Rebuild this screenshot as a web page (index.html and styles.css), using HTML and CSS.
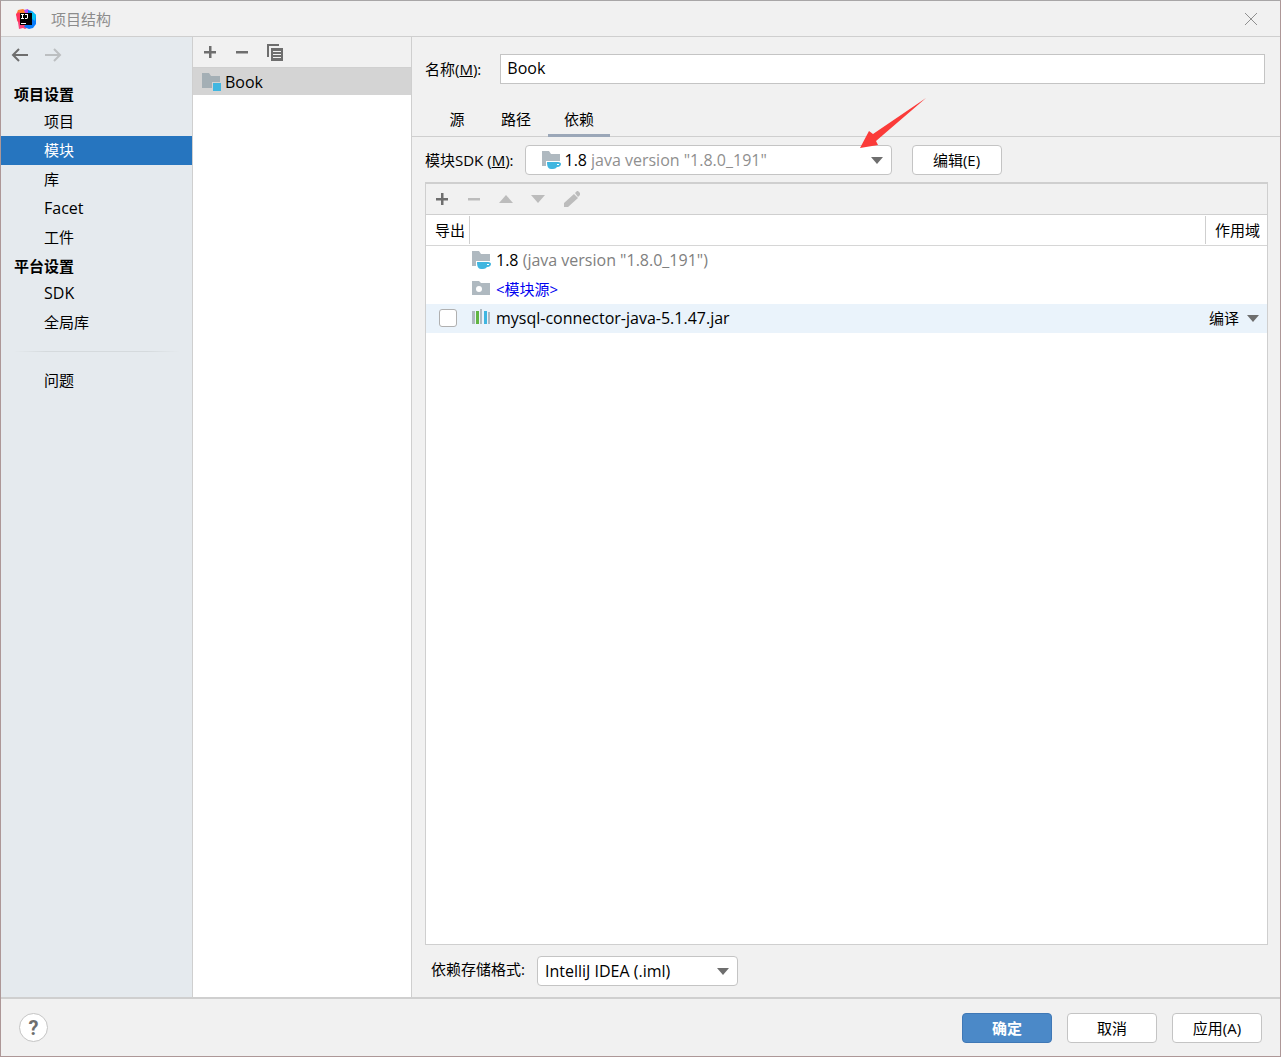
FILE: index.html
```html
<!DOCTYPE html>
<html lang="zh-CN">
<head>
<meta charset="utf-8">
<title>项目结构</title>
<link rel="stylesheet" href="styles.css">
</head>
<body>
<svg class="defs" aria-hidden="true">
  <symbol id="sdk" viewBox="0 0 20 18">
    <path fill="#afb9c0" d="M1 0h7l2 3h9v7H5v5H1z"/>
    <path fill="#40b6e0" d="M6 11h11c2 0 3 1 3 2s-1 3-4 3c-1 1-2 2-4 2h-2c-3 0-4-3-4-7z"/>
    <path fill="#fff" d="M16 13h2v1h-2z"/>
  </symbol>
  <symbol id="plus" viewBox="0 0 14 14"><path d="M6 1h2.5v5H13v2.500H8.500V13H6V8.500H1V6h5z"/></symbol>
  <symbol id="minus" viewBox="0 0 14 14"><path d="M1 6h12v2.500H1z"/></symbol>
</svg>
<div class="window">
  <header class="titlebar">
    <svg class="logo" viewBox="0 0 20 20" aria-hidden="true">
      <path fill="#fc7d31" d="M2 1l5-1 5 3-3 9-7 1-1-3 1-2-2-2z"/>
      <path fill="#fe315d" d="M0 5l3-2 3 4v9L3 15l-2-4z"/>
      <path fill="#f9447a" d="M2 13l6 1 3 5-2 1-2-1-4 1z"/>
      <path fill="#b74af7" d="M8 1l4-1 2 4-4 2z"/>
      <path fill="#087cfa" d="M12 1l4 1 4 4v9l-3 4-4 1-5-2 4-7z"/>
      <path fill="#07c3f2" d="M15 2l5 4-1 6-4-3z"/>
      <path d="M4 4h12v12H4z"/>
      <path fill="#fff" d="M5 5h3v1H7v3h1v1H5V9h1V6H5zM9 5h3v4l-1 1H9V9h2V6H9zM5 14h5v1H5z"/>
    </svg>
    <h1 class="title">项目结构</h1>
    <button class="close" aria-label="关闭"><svg viewBox="0 0 14 14"><path d="M1 1l12 12M13 1L1 13"/></svg></button>
  </header>

  <div class="body">
    <nav class="sidebar">
      <div class="history">
        <button class="icon-button" aria-label="后退"><svg class="arrow" viewBox="0 0 18 14"><path d="M17 7H2M8 1L2 7l6 6"/></svg></button>
        <button class="icon-button off" aria-label="前进"><svg class="arrow" viewBox="0 0 18 14"><path d="M1 7h15M10 1l6 6-6 6"/></svg></button>
      </div>
      <h2 class="group">项目设置</h2>
      <a class="item" href="#project">项目</a>
      <a class="item current" href="#modules">模块</a>
      <a class="item" href="#libraries">库</a>
      <a class="item latin" href="#facets">Facet</a>
      <a class="item" href="#artifacts">工件</a>
      <h2 class="group">平台设置</h2>
      <a class="item latin" href="#sdk">SDK</a>
      <a class="item" href="#global">全局库</a>
      <hr class="divider">
      <a class="item" href="#problems">问题</a>
    </nav>

    <section class="modules">
      <div class="toolbar modules-toolbar">
        <button class="icon-button" aria-label="添加"><svg class="glyph"><use href="#plus"/></svg></button>
        <button class="icon-button" aria-label="移除"><svg class="glyph"><use href="#minus"/></svg></button>
        <button class="icon-button" aria-label="复制"><svg class="copy" viewBox="0 0 16 17"><path d="M0 0h12v2H2v11H0z"/><path fill-rule="evenodd" d="M4 4h12v13H4zM6 7v1h8V7zM6 10v1h8v-1zM6 13v1h8v-1z"/></svg></button>
      </div>
      <a class="module latin" href="#book">
        <svg class="module-icon" viewBox="0 0 20 18"><path fill="#a4afb5" d="M1 0h7l2 3h9v6h-8v6H1z"/><path fill="#40b6e0" d="M12 10h8v8h-8z"/></svg>
        <span>Book</span>
      </a>
    </section>

    <main class="editor">
      <div class="name-row">
        <label for="name">名称(<u>M</u>):</label>
        <input class="name latin" id="name" type="text" value="Book">
      </div>
      <div class="tabs" role="tablist">
        <button class="tab" role="tab">源</button>
        <button class="tab" role="tab">路径</button>
        <button class="tab active" role="tab" aria-selected="true">依赖</button>
      </div>
      <div class="sdk-row">
        <label for="sdk-version">模块SDK (<u>M</u>):</label>
        <div class="combo sdk-combo latin">
          <svg class="row-icon"><use href="#sdk"/></svg>
          <span>1.8</span>
          <select class="sdk-select" id="sdk-version"><option>java version "1.8.0_191"</option></select>
          <svg class="pointer" viewBox="0 0 66 50" aria-hidden="true"><path d="M0 50l9-17 4 3L66 0 16 43l2 4z"/></svg>
        </div>
        <button class="button">编辑(E)</button>
      </div>
      <div class="panel">
        <div class="toolbar panel-toolbar">
          <button class="icon-button" aria-label="添加"><svg class="glyph"><use href="#plus"/></svg></button>
          <button class="icon-button off" aria-label="移除"><svg class="glyph"><use href="#minus"/></svg></button>
          <button class="icon-button off" aria-label="上移"><svg class="glyph" viewBox="0 0 14 14"><path d="M7 3l7 8H0z"/></svg></button>
          <button class="icon-button off" aria-label="下移"><svg class="glyph" viewBox="0 0 14 14"><path d="M0 3h14l-7 8z"/></svg></button>
          <button class="icon-button off" aria-label="编辑"><svg class="pencil" viewBox="0 0 18 18"><path d="M1 13L11 4l4 4L5 17H1zM12 3l2-2h1l2 2v2l-2 2z"/></svg></button>
        </div>
        <table class="deps">
          <thead>
            <tr><th class="export"><span>导出</span></th><th></th><th class="scope"><span>作用域</span></th></tr>
          </thead>
          <tbody>
            <tr><td></td><td><div class="dep latin"><svg class="row-icon"><use href="#sdk"/></svg><span>1.8 <span class="muted">(java version "1.8.0_191")</span></span></div></td><td></td></tr>
            <tr><td></td><td><div class="dep"><svg class="row-icon" viewBox="0 0 20 18"><path fill="#afb9c0" d="M1 1h7l2 2h9v12H1z"/><circle cx="8" cy="9" r="3" fill="#fff"/></svg><span class="source">&lt;模块源&gt;</span></div></td><td></td></tr>
            <tr class="selected">
              <td><input class="check" type="checkbox" aria-label="导出 mysql-connector-java-5.1.47.jar"></td>
              <td><div class="dep latin"><svg class="row-icon" viewBox="0 0 20 18"><path fill="#afb9c0" d="M1 2h3v13H1zM9 0h2v15H9zM17 3h2v12h-2z"/><path fill="#62b543" d="M5 2h3v13H5z"/><path fill="#40b6e0" d="M13 2h3v13h-3z"/></svg><span>mysql-connector-java-5.1.47.jar</span></div></td>
              <td><select class="scope-select" aria-label="作用域"><option>编译</option></select></td>
            </tr>
          </tbody>
        </table>
      </div>
      <div class="format-row">
        <label for="format">依赖存储格式:</label>
        <select class="format latin" id="format"><option>IntelliJ IDEA (.iml)</option></select>
      </div>
    </main>
  </div>

  <footer class="footer">
    <button class="help" aria-label="帮助">?</button>
    <button class="button primary">确定</button>
    <button class="button">取消</button>
    <button class="button">应用(A)</button>
  </footer>
</div>
</body>
</html>
```
FILE: styles.css
```css
* {
  box-sizing: border-box;
}

body {
  margin: 0;
  font: 15px/20px "Open Sans", "Noto Sans CJK SC", sans-serif;
  color: #000;
}

button,
input,
select {
  margin: 0;
  font: inherit;
  color: inherit;
}

svg {
  display: block;
  flex: none;
}

.defs {
  display: none;
}

.latin {
  font-size: 16px;
}

.window {
  display: flex;
  flex-direction: column;
  min-height: 100vh;
  background: #f1f1f1;
  border: 1px solid #ad9797;
  border-top-color: #a8a6a7;
}

.titlebar {
  display: flex;
  align-items: center;
  height: 36px;
  padding: 0 22px 0 15px;
  border-bottom: 1px solid #cfcfcf;
}

.logo {
  width: 20px;
  height: 20px;
  margin-right: 15px;
}

.title {
  flex: 1;
  margin: 0;
  font-size: 15px;
  font-weight: 400;
  color: #8c8c8c;
}

.close {
  padding: 0;
  background: none;
  border: 0;
}

.close svg {
  width: 14px;
  height: 14px;
  fill: none;
  stroke: #8f8f8f;
}

.body {
  display: flex;
  flex: 1;
}

.sidebar {
  flex: none;
  width: 192px;
  background: #e5eaee;
  border-right: 1px solid #cfcfcf;
}

.history {
  display: flex;
  gap: 15px;
  height: 43px;
  padding: 11px 10px 18px;
}

.icon-button {
  display: flex;
  align-items: center;
  padding: 0;
  background: none;
  border: 0;
  fill: #6e6e6e;
  stroke: none;
}

.icon-button.off {
  fill: #bcbcbc;
}

.arrow {
  width: 18px;
  height: 14px;
  fill: none;
  stroke: #6e6e6e;
  stroke-width: 2;
}

.off .arrow {
  stroke: #bcbfc1;
}

.group {
  margin: 0;
  padding: 4px 13px 3px;
  font-size: 15px;
  line-height: 20px;
  font-weight: 700;
}

.item {
  display: block;
  padding: 0 43px;
  line-height: 29px;
  color: #000;
  text-decoration: none;
}

.item.current {
  background: #2675bf;
  color: #fff;
}

.divider {
  height: 1px;
  margin: 14px 12px;
  border: 0;
  background: linear-gradient(to right, transparent, #d5dadd 20%, #d5dadd 80%, transparent);
}

.modules {
  flex: none;
  width: 219px;
  background: #fff;
  border-right: 1px solid #cfcfcf;
}

.toolbar {
  display: flex;
  align-items: center;
  height: 31px;
  background: #f1f1f1;
}

.modules-toolbar {
  gap: 18px;
  padding: 0 10px;
  border-bottom: 1px solid #d0d0d0;
}

.glyph {
  width: 14px;
  height: 14px;
}

.copy {
  width: 16px;
  height: 17px;
}

.module {
  display: flex;
  align-items: center;
  gap: 4px;
  height: 27px;
  padding: 1px 8px 0;
  background: #d4d4d4;
  color: #000;
  text-decoration: none;
}

.module-icon,
.row-icon {
  width: 20px;
  height: 18px;
}

.editor {
  display: flex;
  flex: 1;
  flex-direction: column;
  min-width: 0;
}

.name-row {
  display: flex;
  align-items: center;
  gap: 19px;
  padding: 17px 15px 0 13px;
}

.name {
  flex: 1;
  min-width: 0;
  height: 30px;
  padding: 0 6px 2px;
  background: #fff;
  border: 1px solid #c4c4c4;
}

.tabs {
  display: flex;
  gap: 1px;
  height: 38px;
  margin-top: 15px;
  padding-left: 18px;
  border-bottom: 1px solid #cfcfcf;
}

.tab {
  min-width: 54px;
  height: 38px;
  padding: 5px 16px 0;
  background: none;
  border: 0;
  border-bottom: 3px solid transparent;
}

.tab.active {
  border-color: #9ba7b8;
}

.sdk-row {
  display: flex;
  align-items: center;
  padding: 8px 13px 7px;
}

select {
  appearance: none;
  border: 0;
  background: url("data:image/svg+xml,%3Csvg xmlns='http://www.w3.org/2000/svg' width='12' height='7'%3E%3Cpath fill='%236e6e6e' d='M0 0h12L6 7z'/%3E%3C/svg%3E") no-repeat right 8px center;
}

.combo,
.format {
  height: 30px;
  background-color: #fff;
  border: 1px solid #c4c4c4;
  border-radius: 4px;
}

.sdk-combo {
  position: relative;
  display: flex;
  align-items: center;
  gap: 4px;
  width: 367px;
  margin: 0 20px 0 11px;
  padding-left: 15px;
}

.sdk-select {
  flex: 1;
  align-self: stretch;
  min-width: 0;
  padding: 0;
  color: #8f8f8f;
}

.pointer {
  position: absolute;
  top: -48px;
  right: -35px;
  width: 66px;
  height: 50px;
  fill: #fb3b39;
  pointer-events: none;
}

.button {
  width: 90px;
  height: 30px;
  padding: 0;
  background: #fff;
  border: 1px solid #c4c4c4;
  border-radius: 4px;
}

.panel {
  flex: 1;
  margin: 0 12px 0 13px;
  background: #fff;
  border: 1px solid #cfcfcf;
  border-top-width: 2px;
}

.panel-toolbar {
  gap: 18px;
  padding: 0 9px;
  border-bottom: 1px solid #cfcfcf;
}

.pencil {
  width: 18px;
  height: 18px;
}

.deps {
  width: 100%;
  table-layout: fixed;
  border-collapse: collapse;
}

.deps th {
  height: 30px;
  padding: 1px 0;
  font-weight: 400;
  text-align: left;
  border-bottom: 1px solid #d6d6d6;
}

.deps th span {
  display: block;
  line-height: 28px;
}

.export {
  width: 44px;
}

.export span {
  padding-left: 9px;
  border-right: 1px solid #cfcfcf;
}

.scope {
  width: 62px;
}

.scope span {
  padding-left: 9px;
  border-left: 1px solid #cfcfcf;
}

.deps td {
  height: 29px;
  padding: 0;
}

.dep {
  display: flex;
  align-items: center;
  gap: 5px;
  height: 28px;
  padding-left: 1px;
}

.muted {
  color: #808080;
}

.source {
  color: #0000f0;
}

.selected {
  background: #eaf3fb;
}

.check {
  display: block;
  width: 18px;
  height: 18px;
  margin-left: 13px;
  appearance: none;
  background: #fff;
  border: 1px solid #b0b0b0;
  border-radius: 3px;
}

.scope-select {
  display: block;
  width: 100%;
  height: 28px;
  padding: 0 4px;
}

.format-row {
  display: flex;
  gap: 12px;
  padding: 11px 19px;
}

.format-row label {
  padding-top: 3px;
}

.format {
  width: 201px;
  padding: 0 7px;
}

.footer {
  display: flex;
  align-items: center;
  gap: 15px;
  height: 59px;
  padding: 0 18px;
  border-top: 2px solid #cfcfcf;
}

.help {
  width: 29px;
  height: 29px;
  margin-right: auto;
  padding: 0;
  font: 700 20px/24px Roboto, sans-serif;
  color: #6e6e6e;
  background: #fff;
  border: 1px solid #c4c4c4;
  border-radius: 50%;
}

.primary {
  background: #4b89c8;
  border-color: #3f78b6;
  color: #fff;
  font-weight: 700;
}
```
